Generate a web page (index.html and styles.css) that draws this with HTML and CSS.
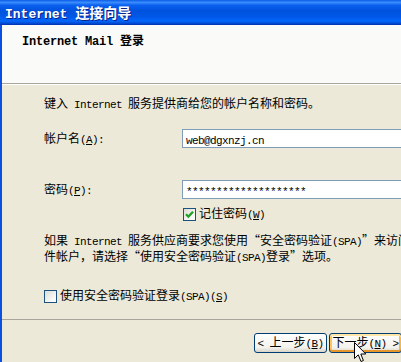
FILE: index.html
```html
<!DOCTYPE html>
<html lang="zh-CN">
    <head>
        <meta charset="UTF-8">
        <meta name="viewport" content="width=device-width, initial-scale=1.0">
        <title>Internet 连接向导</title>
        <link rel="stylesheet" href="styles.css">
    </head>
    <body>
        <div class="window">
            <div class="titlebar">
                <span class="title"><span class="en">Internet </span>连接向导</span>
            </div>
            <div class="header">
                <h1><span class="en">Internet Mail </span>登录</h1>
            </div>
            <div class="wizard-body">
                <p class="intro">键入<span class="en"> Internet </span>服务提供商给您的帐户名称和密码。</p>
                <div class="field account">
                    <label>帐户名<span class="en">(<u>A</u>):</span></label>
                    <div class="textbox"><span class="en">web@dgxnzj.cn</span></div>
                </div>
                <div class="field password">
                    <label>密码<span class="en">(<u>P</u>):</span></label>
                    <div class="textbox"><span class="en">********************</span></div>
                </div>
                <div class="check remember">
                    <span class="box">
                        <svg viewBox="0 0 11 11" width="11" height="11"><path d="M2 5.2 L4.4 7.6 L9 2.8" fill="none" stroke="#21a121" stroke-width="2.2"/></svg>
                    </span>
                    <span class="check-label">记住密码<span class="en">(<u>W</u>)</span></span>
                </div>
                <p class="note">如果<span class="en"> Internet </span>服务供应商要求您使用<span class="q ql">“</span>安全密码验证<span class="en">(SPA)</span><span class="q qr">”</span>来访问电子邮<br>件帐户，请选择<span class="q ql">“</span>使用安全密码验证<span class="en">(SPA)</span>登录<span class="q qr">”</span>选项。</p>
                <div class="check spa">
                    <span class="box"></span>
                    <span class="check-label">使用安全密码验证登录<span class="en">(SPA)(<u>S</u>)</span></span>
                </div>
            </div>
            <div class="footer">
                <button class="btn"><span class="en">&lt; </span>上一步<span class="en">(<u>B</u>)</span></button>
                <button class="btn default">下一步<span class="en">(<u>N</u>) &gt;</span></button>
            </div>
            <svg class="cursor" viewBox="0 0 13 21" width="13" height="21">
                <path d="M0.5 0.5 L0.5 16.5 L4.3 12.8 L7 19.5 L9.4 18.5 L6.8 12 L11.8 12 Z" fill="#fff" stroke="#000" stroke-width="1"/>
            </svg>
        </div>
    </body>
</html>
```

FILE: styles.css
```css
* {
    margin: 0;
    padding: 0;
    box-sizing: border-box;
}
body {
    font-family: "Noto Sans CJK SC", sans-serif;
    font-size: 12px;
    line-height: 14px;
    color: #000;
    background-color: #ece9d8;
    overflow: hidden;
}
.en {
    font-family: "Liberation Mono", monospace;
    font-size: 11px;
    letter-spacing: -0.6px;
}
.q {
    display: inline-block;
    width: 12px;
}
.ql {
    text-align: right;
}
.qr {
    text-align: left;
}
.window {
    position: relative;
    width: 480px;
    height: 362px;
    border-left: 2px solid #0b4fe0;
    background-color: #ece9d8;
}
.titlebar {
    height: 25px;
    margin-left: -2px;
    padding-left: 5px;
    background: linear-gradient(#0a5de8 0%, #3b8dfc 10%, #0a5ff0 22%, #0052dc 45%, #0058e8 70%, #0366fa 88%, #0042c8 100%);
    border-bottom: 1px solid #0038b8;
}
.title {
    color: #fff;
    font-size: 14px;
    font-weight: bold;
    line-height: 24px;
    text-shadow: 1px 1px #0a1f8a;
}
.title .en {
    font-size: 13px;
    letter-spacing: 0;
}
.header {
    height: 59px;
    padding-top: 8px;
    padding-left: 20px;
    background-color: #fafaf8;
    border-bottom: 1px solid #a8a69c;
}
.header h1 {
    font-size: 12px;
    font-weight: bold;
    line-height: 14px;
}
.header h1 .en {
    font-size: 12px;
    letter-spacing: -0.2px;
}
.wizard-body {
    height: 235px;
    padding-top: 11px;
    padding-left: 42px;
    border-top: 1px solid #fff;
    display: flex;
    flex-direction: column;
    align-items: flex-start;
}
.intro {
    white-space: nowrap;
}
.field {
    display: flex;
    align-items: center;
}
.field label {
    width: 138px;
}
.account {
    margin-top: 17px;
}
.password {
    margin-top: 32px;
}
.textbox {
    width: 260px;
    height: 19px;
    padding-left: 3px;
    line-height: 17px;
    background-color: #fff;
    border: 1px solid #7f9db9;
    white-space: nowrap;
}
.check {
    display: flex;
    align-items: center;
    gap: 3px;
    white-space: nowrap;
}
.box {
    width: 13px;
    height: 13px;
    border: 1px solid #1c5180;
    background: linear-gradient(135deg, #dcdcd5, #fbfbf9 80%);
    display: flex;
}
.remember {
    margin-top: 7px;
    margin-left: 139px;
}
.note {
    margin-top: 11px;
    white-space: nowrap;
}
.spa {
    margin-top: 23px;
}
.footer {
    height: 42px;
    border-top: 1px solid #a8a69c;
    padding-top: 13px;
    padding-left: 252px;
    display: flex;
    gap: 2px;
}
.btn {
    width: 73px;
    height: 20px;
    font-family: "Noto Sans CJK SC", sans-serif;
    font-size: 12px;
    line-height: 14px;
    color: #000;
    border: 1px solid #003c74;
    border-radius: 3px;
    background: linear-gradient(#ffffff, #f3f2ec 75%, #d8d4c8);
    white-space: nowrap;
}
.btn.default {
    box-shadow: inset 0 2px 0 #ffe8a6, inset 0 -2px 0 #e5972c, inset 2px 0 0 #fbc761, inset -2px 0 0 #f5b84a;
}
.cursor {
    position: absolute;
    left: 352px;
    top: 342px;
}
```
